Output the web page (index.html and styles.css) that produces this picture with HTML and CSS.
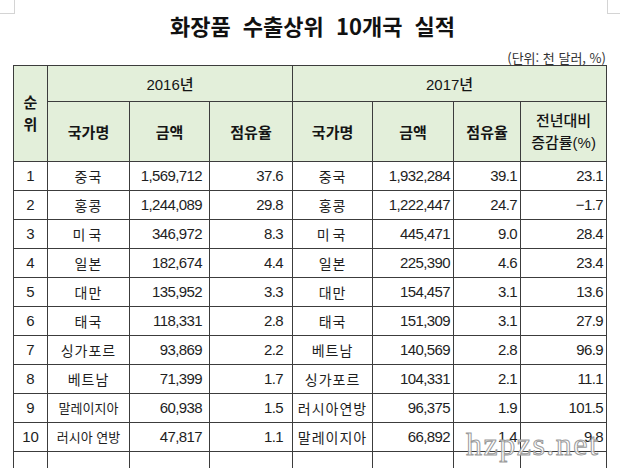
FILE: index.html
```html
<!DOCTYPE html>
<html lang="ko">
<head>
<meta charset="utf-8">
<link rel="stylesheet" href="styles.css">
</head>
<body>
<div class="page">
  <span class="mark mark-left"></span>
  <span class="mark mark-right"></span>
  <h1 class="title">화장품 수출상위 10개국 실적</h1>
  <p class="unit">(단위: 천 달러, %)</p>
  <table class="stats">
    <colgroup>
      <col class="c-rank"><col class="c-name"><col class="c-amt"><col class="c-share">
      <col class="c-name2"><col class="c-amt2"><col class="c-share2"><col class="c-rate">
    </colgroup>
    <thead>
      <tr class="h1">
        <th rowspan="2" class="rank-h">순<br>위</th>
        <th colspan="3">2016년</th>
        <th colspan="4">2017년</th>
      </tr>
      <tr class="h2">
        <th>국가명</th><th>금액</th><th>점유율</th>
        <th>국가명</th><th>금액</th><th>점유율</th><th class="rate-h">전년대비<br>증감률(%)</th>
      </tr>
    </thead>
    <tbody>
      <tr><td class="rank">1</td><td class="nm">중국</td><td class="num a">1,569,712</td><td class="num s">37.6</td><td class="nm">중국</td><td class="num b">1,932,284</td><td class="num b">39.1</td><td class="num b">23.1</td></tr>
      <tr><td class="rank">2</td><td class="nm">홍콩</td><td class="num a">1,244,089</td><td class="num s">29.8</td><td class="nm">홍콩</td><td class="num b">1,222,447</td><td class="num b">24.7</td><td class="num b">−1.7</td></tr>
      <tr><td class="rank">3</td><td class="nm wide">미국</td><td class="num a">346,972</td><td class="num s">8.3</td><td class="nm wide">미국</td><td class="num b">445,471</td><td class="num b">9.0</td><td class="num b">28.4</td></tr>
      <tr><td class="rank">4</td><td class="nm">일본</td><td class="num a">182,674</td><td class="num s">4.4</td><td class="nm">일본</td><td class="num b">225,390</td><td class="num b">4.6</td><td class="num b">23.4</td></tr>
      <tr><td class="rank">5</td><td class="nm">대만</td><td class="num a">135,952</td><td class="num s">3.3</td><td class="nm">대만</td><td class="num b">154,457</td><td class="num b">3.1</td><td class="num b">13.6</td></tr>
      <tr><td class="rank">6</td><td class="nm">태국</td><td class="num a">118,331</td><td class="num s">2.8</td><td class="nm">태국</td><td class="num b">151,309</td><td class="num b">3.1</td><td class="num b">27.9</td></tr>
      <tr><td class="rank">7</td><td class="nm">싱가포르</td><td class="num a">93,869</td><td class="num s">2.2</td><td class="nm">베트남</td><td class="num b">140,569</td><td class="num b">2.8</td><td class="num b">96.9</td></tr>
      <tr><td class="rank">8</td><td class="nm">베트남</td><td class="num a">71,399</td><td class="num s">1.7</td><td class="nm">싱가포르</td><td class="num b">104,331</td><td class="num b">2.1</td><td class="num b">11.1</td></tr>
      <tr><td class="rank">9</td><td class="nm tight">말레이지아</td><td class="num a">60,938</td><td class="num s">1.5</td><td class="nm">러시아연방</td><td class="num b">96,375</td><td class="num b">1.9</td><td class="num b">101.5</td></tr>
      <tr><td class="rank">10</td><td class="nm tight">러시아 연방</td><td class="num a">47,817</td><td class="num s">1.1</td><td class="nm">말레이지아</td><td class="num b">66,892</td><td class="num b">1.4</td><td class="num b">9.8</td></tr>
      <tr><td class="rank"></td><td></td><td></td><td></td><td></td><td></td><td></td><td></td></tr>
    </tbody>
  </table>
  <span class="watermark">hzpzs.net</span>
</div>
</body>
</html>
```
FILE: styles.css
```css
html, body {
  margin: 0;
  padding: 0;
  background: #fff;
}
.page {
  position: relative;
  width: 620px;
  height: 468px;
  overflow: hidden;
  padding-left: 13px;
  box-sizing: border-box;
  font-family: "Liberation Sans", "Noto Sans CJK KR", sans-serif;
  color: #1e1e1e;
}
.mark {
  position: absolute;
  top: 0;
  width: 14px;
  height: 13px;
  border-bottom: 1px solid #d4d4d4;
}
.mark-left {
  left: 0;
  border-right: 1px solid #d4d4d4;
}
.mark-right {
  left: 607px;
  border-left: 1px solid #d4d4d4;
}
.title {
  margin: 11px 0 0 0;
  height: 28px;
  line-height: 28px;
  font-size: 22px;
  font-weight: 700;
  text-align: center;
  word-spacing: 6px;
  padding-right: 8px;
  color: #111;
  font-family: "Noto Sans CJK KR", "Liberation Sans", sans-serif;
}
.unit {
  margin: 12px 0 0 0;
  height: 14px;
  line-height: 14px;
  font-size: 13px;
  text-align: right;
  padding-right: 14px;
  color: #333;
  font-family: "Noto Sans CJK KR", sans-serif;
}
.stats {
  border-collapse: collapse;
  table-layout: fixed;
  width: 593px;
}
.c-rank { width: 34px; }
.c-name { width: 82px; }
.c-amt { width: 80px; }
.c-share { width: 83px; }
.c-name2 { width: 80px; }
.c-amt2 { width: 81px; }
.c-share2 { width: 67px; }
.c-rate { width: 86px; }
.stats th, .stats td {
  border: 1px solid #3c3c3c;
  padding: 0;
  white-space: nowrap;
  overflow: hidden;
}
.stats th {
  background: #e3efda;
  font-weight: 500;
  font-size: 15px;
  text-align: center;
  color: #151515;
}
.h1 th { height: 35px; }
.h2 th { height: 59px; font-weight: 600; }
.h2 th.rate-h { font-weight: 500; line-height: 22px; }
.rank-h { line-height: 22px; font-weight: 600 !important; }
.stats td {
  height: 28px;
  font-size: 14px;
  line-height: 28px;
}
.rank {
  text-align: center;
  font-size: 15px !important;
}
.nm {
  text-align: center;
  letter-spacing: 1px;
  font-family: "Noto Sans CJK KR", sans-serif;
}
.nm.wide { letter-spacing: 3px; }
.nm.tight { letter-spacing: 0; font-size: 13px !important; }
.num {
  text-align: right;
  font-size: 15px !important;
  letter-spacing: -0.6px;
}
.num.a { padding-right: 7px; }
.num.s { padding-right: 9px; }
.num.b { padding-right: 3px; }
.watermark {
  position: absolute;
  left: 466px;
  top: 426px;
  font-family: "Liberation Serif", serif;
  font-size: 32px;
  letter-spacing: 1.5px;
  color: rgba(255, 255, 255, 0.8);
  -webkit-text-stroke: 1px #9a9a9a;
}
```
